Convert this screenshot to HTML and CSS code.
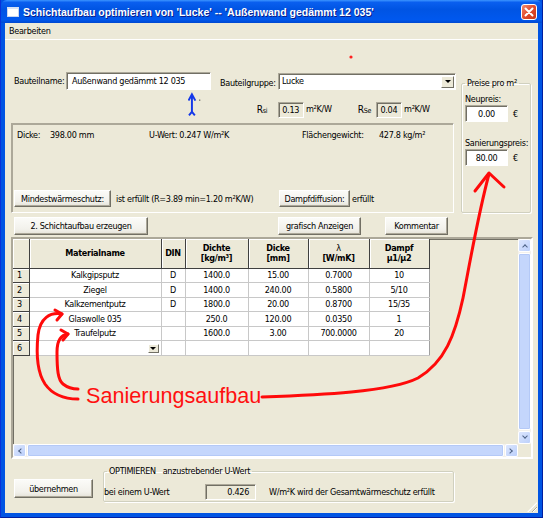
FILE: index.html
```html
<!DOCTYPE html>
<html lang="de">

<head>
  <meta charset="UTF-8">
  <meta name="viewport" content="width=device-width, initial-scale=1.0">
  <title>Schichtaufbau optimieren</title>
  <link rel="stylesheet" href="styles.css">
</head>

<body>
  <div class="window">
    <!-- Titelleiste -->
    <div class="titlebar">
      <i class="app-icon"></i>
      <span class="caption">Schichtaufbau optimieren von 'Lucke' -- 'Außenwand gedämmt 12 035'</span>
      <span class="close">
        <svg width="10" height="10" viewBox="0 0 10 10"><path d="M1.5 1.5 L8.5 8.5 M8.5 1.5 L1.5 8.5" stroke="#fff" stroke-width="2" stroke-linecap="round"/></svg>
      </span>
    </div>
    <div class="menubar"><span>Bearbeiten</span></div>

    <div class="client">
      <div class="top">
        <div class="top-left">
          <div class="row-name">
            <label class="lbl">Bauteilname:</label>
            <div class="field">Außenwand gedämmt 12 035</div>
            <label class="lbl">Bauteilgruppe:</label>
            <div class="field select">Lucke<span class="drop"><i></i></span></div>
          </div>

          <div class="row-rs">
            <svg class="pointer" width="14" height="26" viewBox="0 0 14 26">
              <path d="M4 3 V21 M0.5 8.5 L4 2 L7.5 8.5 M1 23.5 L4 20 L7 23.5" stroke="#1438e8" stroke-width="2" fill="none"/>
              <circle cx="12" cy="8" r="0.7" fill="#333"/>
            </svg>
            <span class="rs">R<small>si</small></span>
            <div class="field readonly">0.13</div>
            <span class="unit">m²K/W</span>
            <span class="rs rs-e">R<small>Se</small></span>
            <div class="field readonly">0.04</div>
            <span class="unit">m²K/W</span>
          </div>

          <div class="panel">
            <div class="values">
              <span>Dicke:</span>
              <span>398.00 mm</span>
              <span>U-Wert: 0.247 W/m²K</span>
              <span>Flächengewicht:</span>
              <span>427.8 kg/m²</span>
            </div>
            <div class="checks">
              <button class="btn btn-min">Mindestwärmeschutz:</button>
              <span class="check-text">ist erfüllt (R=3.89 min=1.20 m²K/W)</span>
              <button class="btn btn-dampf">Dampfdiffusion:</button>
              <span>erfüllt</span>
            </div>
          </div>

          <div class="actions">
            <button class="btn btn-layer">2. Schichtaufbau erzeugen</button>
            <button class="btn btn-graph">grafisch Anzeigen</button>
            <button class="btn btn-note">Kommentar</button>
          </div>
        </div>

        <fieldset class="prices">
          <legend>Preise pro m²</legend>
          <p class="price-label">Neupreis:</p>
          <div class="price-row">
            <div class="field price">0.00</div><span>€</span>
          </div>
          <p class="price-label second">Sanierungspreis:</p>
          <div class="price-row">
            <div class="field price">80.00</div><span>€</span>
          </div>
        </fieldset>
      </div>

      <!-- Tabelle der Schichten -->
      <div class="grid">
        <div class="grid-view">
          <table class="layers">
            <colgroup>
              <col style="width: 16px">
              <col style="width: 132px">
              <col style="width: 24px">
              <col style="width: 63px">
              <col style="width: 60px">
              <col style="width: 61px">
              <col style="width: 60px">
            </colgroup>
            <thead>
              <tr>
                <th></th>
                <th>Materialname</th>
                <th>DIN</th>
                <th>Dichte<br>[kg/m³]</th>
                <th>Dicke<br>[mm]</th>
                <th><span class="lambda">λ</span><br>[W/mK]</th>
                <th>Dampf<br>µ1/µ2</th>
              </tr>
            </thead>
            <tbody>
              <tr><th>1</th><td>Kalkgipsputz</td><td>D</td><td>1400.0</td><td>15.00</td><td>0.7000</td><td>10</td></tr>
              <tr><th>2</th><td>Ziegel</td><td>D</td><td>1400.0</td><td>240.00</td><td>0.5800</td><td>5/10</td></tr>
              <tr><th>3</th><td>Kalkzementputz</td><td>D</td><td>1800.0</td><td>20.00</td><td>0.8700</td><td>15/35</td></tr>
              <tr><th>4</th><td>Glaswolle 035</td><td></td><td>250.0</td><td>120.00</td><td>0.0350</td><td>1</td></tr>
              <tr><th>5</th><td>Traufelputz</td><td></td><td>1600.0</td><td>3.00</td><td>700.0000</td><td>20</td></tr>
              <tr><th>6</th><td class="combo"><span class="drop"><i></i></span></td><td></td><td></td><td></td><td></td><td></td></tr>
            </tbody>
          </table>
        </div>
        <div class="vscroll">
          <span class="arrow up"></span>
          <span class="thumb"></span>
          <span class="arrow down"></span>
        </div>
        <div class="hscroll">
          <span class="arrow left"></span>
          <span class="thumb"></span>
          <span class="arrow right"></span>
        </div>
        <div class="scroll-corner"></div>
      </div>

      <div class="bottom">
        <button class="btn btn-apply">übernehmen</button>
        <fieldset class="optimize">
          <legend>OPTIMIEREN &nbsp; anzustrebender U-Wert</legend>
          <span class="opt-text">bei einem U-Wert</span>
          <div class="field readonly target">0.426</div>
          <span>W/m²K wird der Gesamtwärmeschutz erfüllt</span>
        </fieldset>
      </div>
      <i class="grip"></i>
    </div>

    <!-- rote Markierungen -->
    <svg class="marks" width="543" height="518" viewBox="0 0 543 518">
      <g stroke="#ff0a0a" stroke-width="3" fill="none" stroke-linecap="round" stroke-linejoin="round">
        <path d="M62 314 C50 312 40 318 38 335 C36 355 37 372 45 384 C52 394 62 399 78 399"/>
        <path d="M55 310 L62 314 L57 320"/>
        <path d="M68 334 C60 335 57 342 57 352 C57 370 58 380 63 384 C68 388 72 389 78 389"/>
        <path d="M61 330 L68 334 L63 340"/>
        <path d="M262 397 C320 395 390 392 418 378 C445 362 455 335 463 298 C470 262 478 215 489 174"/>
        <path d="M475 191 L489 173 L504 187"/>
      </g>
      <circle cx="351" cy="57" r="1.6" fill="#ff2020"/>
      <text x="86" y="403" class="mark-text">Sanierungsaufbau</text>
    </svg>
  </div>
</body>

</html>
```

FILE: styles.css
```css
* {
  box-sizing: border-box;
}

body {
  margin: 0;
  background: #fff;
  font: 9px "DejaVu Sans Condensed", "Liberation Sans", sans-serif;
  letter-spacing: -0.3px;
  color: #000;
}

.window {
  position: relative;
  width: 543px;
  height: 518px;
  display: flex;
  flex-direction: column;
  background: #0054e3;
  padding: 0 4px 4px 4px;
  border-left: 1px solid #0831d9;
  border-right: 1px solid #001ea0;
  border-bottom: 1px solid #001ea0;
  overflow: hidden;
}

/* Titelleiste */
.titlebar {
  height: 23px;
  margin: 0 -4px;
  display: flex;
  align-items: center;
  padding: 0 5px 0 6px;
  background: linear-gradient(#3d95ff 0%, #0a5fef 10%, #0054e3 40%, #0058ee 85%, #0048d0 100%);
  border-radius: 6px 6px 0 0;
}

.app-icon {
  width: 12px;
  height: 10px;
  background: #fff;
  border: 1px solid #c9d6ef;
  border-top: 2px solid #d8e2f5;
  margin-right: 4px;
}

.caption {
  flex: 1;
  color: #fff;
  font: bold 10.5px "Liberation Sans", sans-serif;
  letter-spacing: 0;
  text-shadow: 1px 1px #0a1e8a;
  white-space: nowrap;
}

.close {
  width: 16px;
  height: 16px;
  display: flex;
  align-items: center;
  justify-content: center;
  border: 1px solid #fff;
  border-radius: 3px;
  background: linear-gradient(135deg, #f28c6e, #e14a2c 50%, #c83718);
}

.menubar {
  height: 17px;
  background: #ece9d8;
  border-bottom: 1px solid #fff;
  padding: 3px 4px 0;
}

/* Arbeitsbereich */
.client {
  position: relative;
  flex: 1;
  background: #ece9d8;
  padding: 0 7px 0 6px;
}

.top {
  display: flex;
  gap: 5px;
}

.top-left {
  width: 445px;
}

.row-name {
  margin-top: 32px;
  height: 18px;
  display: grid;
  grid-template-columns: 55px 145px 9px 58px 178px;
  align-items: center;
}

.row-name .lbl {
  padding-left: 3px;
  white-space: nowrap;
}

.row-name .field:first-of-type {
  grid-column: 2;
}

.row-name .lbl + .field.select {
  grid-column: 5;
}

.row-name .lbl:nth-of-type(2) {
  grid-column: 4;
  padding-left: 0;
  margin-top: 4px;
}

.field {
  height: 18px;
  background: #fff;
  border: 1px solid;
  border-color: #aca899 #fff #fff #aca899;
  box-shadow: inset 1px 1px #716f64;
  padding: 3px 5px 0;
  white-space: nowrap;
}

.field.readonly {
  background: #ece9d8;
}

.select {
  position: relative;
  height: 17px;
  padding-top: 2px;
  padding-left: 3px;
}

.drop {
  position: absolute;
  top: 2px;
  right: 1px;
  width: 13px;
  height: 12px;
  background: #ece9d8;
  border: 1px solid;
  border-color: #fff #716f64 #716f64 #fff;
  display: flex;
  align-items: center;
  justify-content: center;
}

.drop i {
  border-left: 3px solid transparent;
  border-right: 3px solid transparent;
  border-top: 3px solid #000;
}

.row-rs {
  height: 33px;
  display: flex;
  align-items: flex-start;
}

.pointer {
  margin: 2px 0 0 177px;
}

.rs {
  margin: 14px 0 0 55px;
  width: 22px;
  font-size: 10px;
}

.rs small {
  font-size: 7px;
}

.rs-e {
  margin-left: 0;
  width: 19px;
}

.row-rs .field {
  margin-top: 12px;
  width: 26px;
  height: 16px;
  padding: 2px 3px 0;
}

.row-rs .unit {
  margin-top: 14px;
  width: 55px;
  padding-left: 2px;
}

/* Kennwerte */
.panel {
  width: 443px;
  height: 90px;
  display: flex;
  flex-direction: column;
  justify-content: space-between;
  border: 1px solid;
  border-color: #aca899 #fff #fff #aca899;
  box-shadow: 1px 1px #aca899 inset;
  padding: 6px 0 5px 2px;
}

.values {
  display: grid;
  grid-template-columns: 33px 99px 153px 77px auto;
  padding-left: 3px;
}

.checks {
  display: flex;
  align-items: center;
  height: 17px;
}

.btn {
  font: inherit;
  letter-spacing: inherit;
  color: #000;
  height: 17px;
  padding: 0;
  background: linear-gradient(#fbfbf8, #f2f1eb 70%, #e5e3d9);
  border: 1px solid;
  border-color: #fff #716f64 #716f64 #fff;
  box-shadow: inset -1px -1px #aca899;
  white-space: nowrap;
}

.btn-min {
  width: 97px;
}

.check-text {
  width: 168px;
  padding-left: 5px;
}

.btn-dampf {
  width: 71px;
  margin-right: 2px;
}

.actions {
  margin-top: 4px;
  display: flex;
  height: 18px;
}

.actions .btn {
  height: 18px;
}

.btn-layer {
  margin-left: 3px;
  width: 134px;
}

.btn-graph {
  margin-left: 130px;
  width: 83px;
}

.btn-note {
  margin-left: 24px;
  width: 63px;
}

/* Preise */
.prices {
  margin: 38px 0 0;
  width: 72px;
  height: 135px;
  min-width: 0;
  padding: 0 3px;
  border: 1px solid #d0d0bf;
  box-shadow: inset 1px 1px #fff, 1px 1px #fff;
  border-radius: 2px;
}

.prices legend {
  padding: 0 2px;
  margin-left: 0;
  line-height: 11px;
}

.price-label {
  margin: 5px 0 0 0;
  line-height: 11px;
  white-space: nowrap;
}

.price-label.second {
  margin-top: 16px;
}

.price-row {
  margin-top: 0;
  display: flex;
  align-items: center;
}

.price-row .price {
  width: 43px;
  height: 17px;
  text-align: center;
  padding: 3px 0 0;
}

.price-row span {
  margin-left: 5px;
}

/* Tabelle */
.grid {
  margin-top: 2px;
  width: 522px;
  height: 222px;
  border: 2px solid;
  border-color: #aca899 #fff #fff #aca899;
  box-shadow: inset 1px 1px #716f64;
  display: grid;
  grid-template-columns: 505px 13px;
  grid-template-rows: 205px 13px;
}

.grid-view {
  overflow: hidden;
}

.layers {
  border-collapse: collapse;
  table-layout: fixed;
  width: 416px;
}

.layers th,
.layers td {
  padding: 0;
  text-align: center;
  white-space: nowrap;
  overflow: hidden;
}

.layers thead th {
  height: 29px;
  font-weight: bold;
  line-height: 10px;
  background: #ece9d8;
  border-right: 1px solid #404040;
  border-bottom: 1px solid #404040;
  box-shadow: inset 1px 1px #fff;
}

.layers .lambda {
  font-weight: normal;
}

.layers tbody th {
  height: 14.5px;
  font-weight: normal;
  text-align: left;
  padding-left: 4px;
  background: #ece9d8;
  border-right: 1px solid #404040;
  border-bottom: 1px solid #404040;
  box-shadow: inset 1px 1px #fff;
}

.layers td {
  height: 14.5px;
  background: #fff;
  border-right: 1px solid #c8c8c8;
  border-bottom: 1px solid #c8c8c8;
}

.layers td:last-child {
  border-right-color: #a0a0a0;
}

.layers .combo {
  position: relative;
}

.layers .combo .drop {
  top: 3px;
  right: 2px;
  width: 11px;
  height: 9px;
}

.vscroll,
.hscroll {
  display: flex;
  background: #f3f1ec;
}

.vscroll {
  flex-direction: column;
}

.arrow {
  flex: none;
  width: 13px;
  height: 13px;
  border: 1px solid #fff;
  border-radius: 2px;
  background: linear-gradient(135deg, #dce6fd, #bcd0fb);
  position: relative;
}

.arrow::after {
  content: "";
  position: absolute;
  left: 4px;
  top: 4px;
  width: 3px;
  height: 3px;
  border: solid #4d6185;
  border-width: 1.5px 0 0 1.5px;
}

.arrow.up::after {
  transform: rotate(45deg);
  top: 5px;
}

.arrow.down::after {
  transform: rotate(225deg);
  top: 2px;
}

.arrow.left::after {
  transform: rotate(-45deg);
  left: 5px;
}

.arrow.right::after {
  transform: rotate(135deg);
  left: 2px;
}

.thumb {
  flex: 1;
  border: 1px solid #fff;
  border-radius: 2px;
  background: #c4d6fc;
  box-shadow: inset 0 0 0 1px #b4c9f7;
  margin: 1px 0;
}

.hscroll .thumb {
  margin: 0 1px;
}

.scroll-corner {
  background: #ece9d8;
}

/* unten */
.bottom {
  margin-top: 7px;
  display: flex;
  align-items: flex-start;
}

.btn-apply {
  margin: 13px 0 0 3px;
  width: 79px;
  height: 19px;
}

.optimize {
  margin: 0 0 0 10px;
  width: 351px;
  height: 36px;
  min-width: 0;
  padding: 5px 0 0 0;
  border: 1px solid #d0d0bf;
  box-shadow: inset 1px 1px #fff, 1px 1px #fff;
  border-radius: 2px;
  display: flex;
  align-items: center;
}

.optimize legend {
  padding: 0 2px;
  margin-left: 3px;
  line-height: 11px;
}

.opt-text {
  width: 101px;
  padding-left: 0;
}

.optimize .target {
  width: 51px;
  height: 16px;
  padding: 2px 6px 0 0;
  text-align: right;
  margin-right: 13px;
}

.grip {
  position: absolute;
  right: 1px;
  bottom: 1px;
  width: 10px;
  height: 10px;
  background: repeating-linear-gradient(135deg, transparent 0 2px, #aca899 2px 3px, #fff 3px 4px);
  clip-path: polygon(100% 0, 100% 100%, 0 100%);
}

/* Markierungen */
.marks {
  position: absolute;
  left: -1px;
  top: 0;
  pointer-events: none;
}

.mark-text {
  font: 21.6px "Liberation Sans", sans-serif;
  letter-spacing: 0;
  fill: #ff1010;
}
```
